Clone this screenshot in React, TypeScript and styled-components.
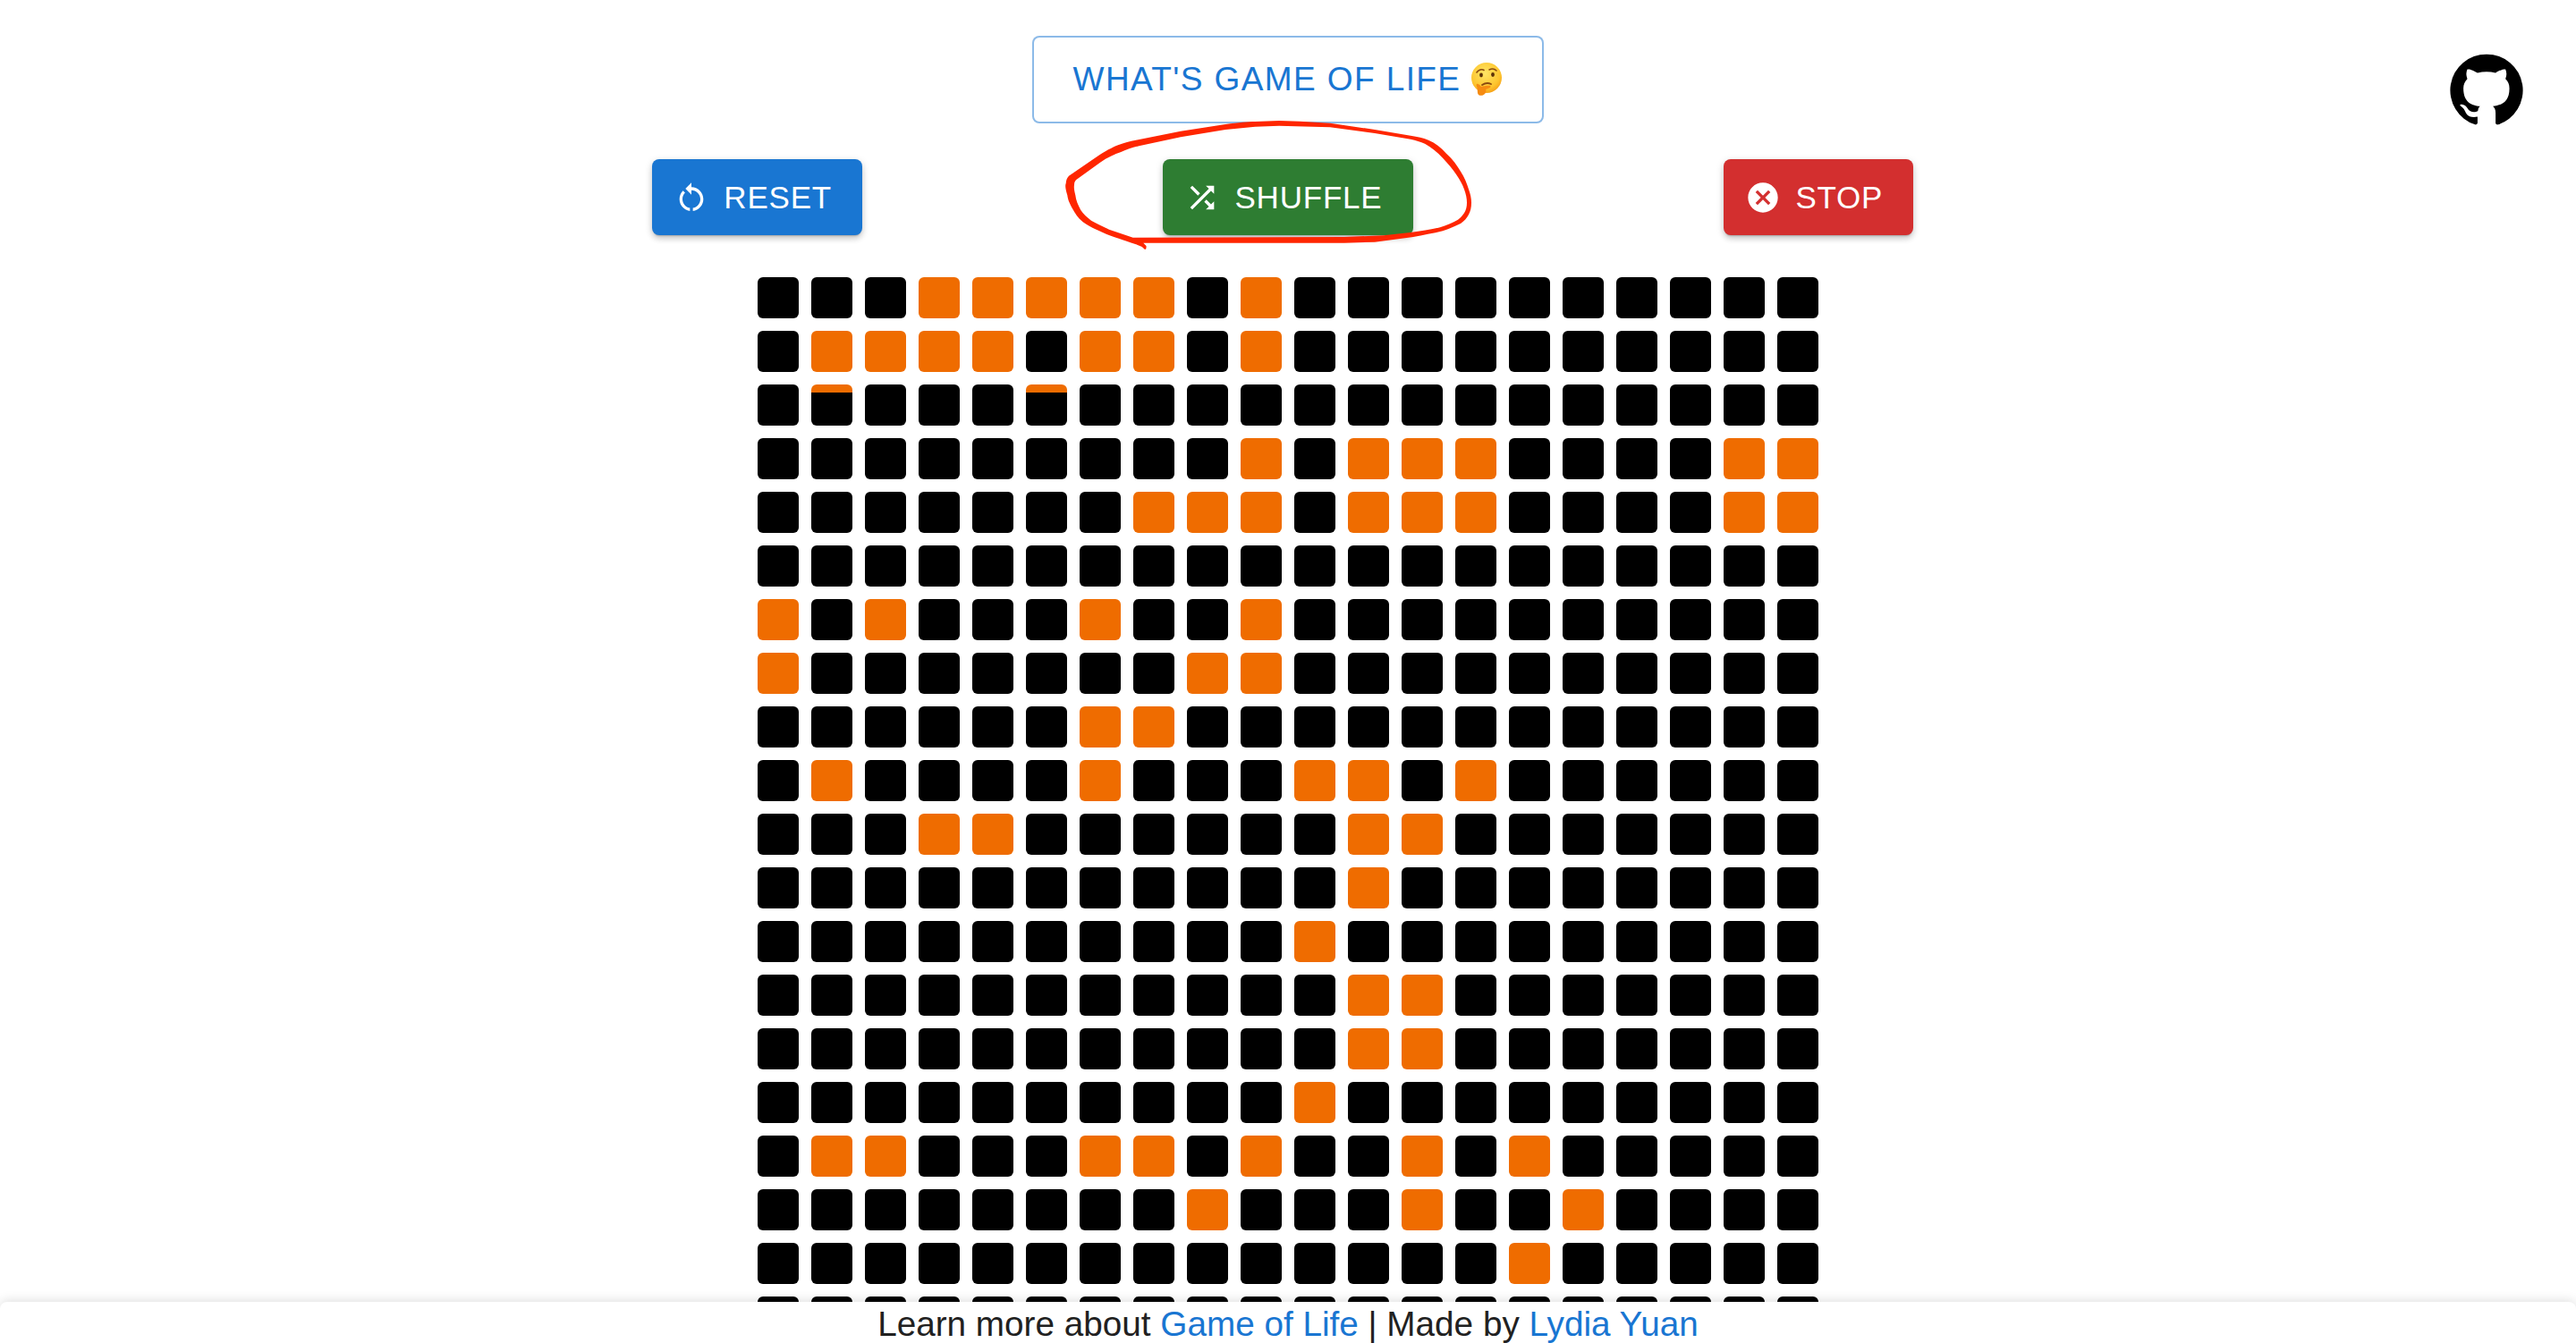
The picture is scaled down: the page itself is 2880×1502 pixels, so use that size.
import * as React from "react";
import styled, {createGlobalStyle} from "styled-components";

const GlobalStyle = createGlobalStyle`
  html, body {
    margin: 0;
    height: 100%;
    overflow: hidden;
    background: #fff;
    font-family: "Liberation Sans", Arial, sans-serif;
  }
`;

const Page = styled.div`
  position: relative;
  display: flex;
  flex-direction: column;
  align-items: center;
  height: 1502px;
  padding-top: 40px;
  box-sizing: border-box;
  overflow: hidden;
`;

const GithubLink = styled.a`
  position: absolute;
  top: 56px;
  right: 56px;
  width: 88px;
  height: 88px;
  color: #000;
  svg {
    display: block;
    width: 100%;
    height: 100%;
    fill: currentColor;
  }
`;

const TitleButton = styled.button`
  display: flex;
  align-items: center;
  height: 98px;
  padding: 0 44px;
  box-sizing: border-box;
  background: #fff;
  border: 2px solid rgba(25, 118, 210, 0.5);
  border-radius: 8px;
  color: #1976d2;
  font: 400 37px "Liberation Sans", Arial, sans-serif;
  letter-spacing: 1.4px;
`;

const Emoji = styled.svg`
  width: 36px;
  height: 38px;
  margin-left: 11px;
`;

const Controls = styled.div`
  display: grid;
  grid-template-columns: repeat(3, 1fr);
  justify-items: center;
  width: 1780px;
  margin-top: 40px;
`;

const ActionButton = styled.button<{ $color: string }>`
  display: flex;
  align-items: center;
  height: 85px;
  padding: 0 34px 0 24px;
  box-sizing: border-box;
  background: ${props => props.$color};
  border: 0;
  border-radius: 8px;
  box-shadow: 0 3px 2px -2px rgba(0, 0, 0, 0.2), 0 4px 6px 0 rgba(0, 0, 0, 0.14), 0 2px 10px 0 rgba(0, 0, 0, 0.12);
  color: #fff;
  font: 400 35px "Liberation Sans", Arial, sans-serif;
  letter-spacing: 0.8px;
  svg {
    width: 40px;
    height: 40px;
    margin-right: 16px;
    fill: currentColor;
  }
`;

const Board = styled.div`
  display: grid;
  grid-template-columns: repeat(20, 46px);
  grid-auto-rows: 46px;
  gap: 14px;
  margin-top: 47px;
`;

const Cell = styled.div<{ $alive: boolean; $stripe: boolean }>`
  border-radius: 6px;
  background: ${props => props.$stripe
    ? "linear-gradient(#ef6c00 9px, #000 9px)"
    : props.$alive ? "#ef6c00" : "#000"};
`;

const Scribble = styled.svg`
  position: absolute;
  left: 1170px;
  top: 125px;
  width: 490px;
  height: 165px;
  fill: #ff2600;
`;

const Footer = styled.footer`
  position: absolute;
  left: 0;
  right: 0;
  bottom: 0;
  height: 46px;
  overflow: hidden;
  background: #fff;
  border-radius: 8px 8px 0 0;
  box-shadow: 0 -2px 12px rgba(0, 0, 0, 0.12);
  color: #212121;
  font-size: 38.7px;
  line-height: 50px;
  text-align: center;
  white-space: nowrap;
`;

const FooterLink = styled.a`
  color: #1976d2;
  text-decoration: none;
`;

const aliveCells: number[][] = [
  [3, 4, 5, 6, 7, 9],
  [1, 2, 3, 4, 6, 7, 9],
  [],
  [9, 11, 12, 13, 18, 19],
  [7, 8, 9, 11, 12, 13, 18, 19],
  [],
  [0, 2, 6, 9],
  [0, 8, 9],
  [6, 7],
  [1, 6, 10, 11, 13],
  [3, 4, 11, 12],
  [11],
  [10],
  [11, 12],
  [11, 12],
  [10],
  [1, 2, 6, 7, 9, 12, 14],
  [8, 12, 15],
  [14],
  [],
];

// cells caught mid-transition, only the top sliver has turned orange
const stripedCells = ["2-1", "2-5"];

const outer = "M1280 279 Q1276 275 1270 273.3 C1255 268 1245 265 1236.7 261.7 C1226 257 1219 254 1213.3 250 C1206 245 1203 240 1200 235 C1196 228 1194 224 1193.3 218.3 C1191.5 212 1190.5 208 1191.7 205 C1192 201 1193 199 1195 196.7 L1226.7 175 C1236 169 1243 165 1250 162.3 C1257 159.5 1263 158 1270 156.7 L1320 146.7 L1370 139 C1385 137 1395 136 1403.3 136 L1430 135 L1453 135.7 L1487 137.7 L1537 145 L1577 151.7 C1585 153 1591 154 1597 156.7 C1605 160 1611 165 1617 171.7 C1624 178 1629 185 1633 191.7 C1637 198 1640 205 1642 211.7 C1644 217 1645 222 1645 226.7 C1645 232 1644 236 1642 240 C1640 244 1637 247 1633 250 C1627 253 1620 256 1613 258.3 C1602 261 1591 263 1580 265 L1537 270.7 L1503 271.7 L1278.3 271.7 L1281.5 275 Q1282 279 1280 279 Z";
const inner = "M1266.7 265.7 L1240 256.7 C1232 253 1226 250 1220 246.7 C1215 243 1211 239 1208.3 235 C1205 229 1203 224 1202.3 218.3 C1201 213 1200.5 210 1201 206.7 C1201 204 1202 202 1203.3 201 L1230 181.7 C1238 176 1246 172.5 1253.3 170 C1260 167 1266 165 1273.3 163.3 L1320 153.3 L1370 145 L1403.3 141.7 L1430 140.7 L1487 142.3 L1537 149 L1577 155.7 C1583 157 1588 158.5 1593 160.7 C1600 165 1607 170 1613 176.7 C1619 183 1624 189 1628 195 C1632 201 1635 206 1637 211.7 C1639 217 1640 222 1640 226.7 C1640 231 1639 235 1637 238.3 C1635 241 1633 243.5 1630 245.7 C1624 249 1617 252 1610 254.3 C1599 257 1588 258.5 1577 260 L1547 263.3 L1503 265 Z";

const App: React.FC = () => (
  <Page>
    <GlobalStyle/>
    <GithubLink href="#">
      <svg viewBox="0 0 24 24">
        <path d="M12 1.27a11 11 0 00-3.48 21.46c.55.09.73-.28.73-.55v-1.84c-3.03.64-3.67-1.46-3.67-1.46-.55-1.29-1.28-1.65-1.28-1.65-.92-.65.1-.65.1-.65 1.1 0 1.73 1.1 1.73 1.1.92 1.65 2.57 1.2 3.21.92a2 2 0 01.64-1.47c-2.47-.27-5.04-1.19-5.04-5.5 0-1.1.46-2.1 1.2-2.84a3.76 3.76 0 010-2.93s.91-.27 3.11 1.1c1.8-.49 3.7-.49 5.5 0 2.1-1.38 3.02-1.1 3.02-1.1a3.76 3.76 0 010 2.93c.83.74 1.2 1.74 1.2 2.94 0 4.21-2.57 5.13-5.04 5.4.45.37.82.92.82 2.02v3.03c0 .27.1.64.73.55A11 11 0 0012 1.27"/>
      </svg>
    </GithubLink>

    <TitleButton>
      WHAT'S GAME OF LIFE
      <Emoji viewBox="0 0 36 38">
        <defs>
          <radialGradient id="face" cx="0.45" cy="0.35" r="0.7">
            <stop offset="0" stopColor="#ffe566"/>
            <stop offset="0.7" stopColor="#fdc52e"/>
            <stop offset="1" stopColor="#f59a14"/>
          </radialGradient>
        </defs>
        <circle cx="18" cy="17" r="17" fill="url(#face)"/>
        <path d="M7 11c2-3 6-4 8-2.500M21 8c3-1.500 6-1 8 1" fill="none" stroke="#8a4a10" strokeWidth="1.600" strokeLinecap="round"/>
        <ellipse cx="12" cy="14" rx="1.900" ry="2.400" fill="#5d3208"/>
        <ellipse cx="25" cy="13.500" rx="1.900" ry="2.400" fill="#5d3208"/>
        <path d="M13 25c3-2 7-2.500 10-1" fill="none" stroke="#8a4a10" strokeWidth="1.800" strokeLinecap="round"/>
        <path d="M7 24c2-1 4 2 5 3 2-.5 8-1.500 10-1 1 .7.500 2-1 2.500l-4 1.500c1 1.500 0 4-1 5-2 2-5 2.500-7 1-1.500-1.500-1-6-1.500-8-.5-2-1.500-3-.5-4z" fill="#f58b12"/>
      </Emoji>
    </TitleButton>

    <Controls>
      <ActionButton $color="#1976d2">
        <svg viewBox="0 0 24 24">
          <path d="M12 5V2L8 6l4 4V7c3.31 0 6 2.69 6 6 0 2.97-2.160 5.430-5 5.910v2.020c3.950-.49 7-3.850 7-7.930 0-4.420-3.580-8-8-8zm-6 8c0-1.650.67-3.150 1.760-4.240L6.340 7.340C4.900 8.790 4 10.790 4 13c0 4.080 3.050 7.440 7 7.930v-2.020c-2.830-.48-5-2.940-5-5.910z"/>
        </svg>
        RESET
      </ActionButton>
      <ActionButton $color="#2e7d32">
        <svg viewBox="0 0 24 24">
          <path d="M10.590 9.170L5.410 4 4 5.410l5.170 5.170 1.420-1.410zM14.500 4l2.040 2.040L4 18.590 5.410 20 17.960 7.460 20 9.500V4h-5.500zm.33 9.410l-1.410 1.410 3.130 3.130L14.500 20H20v-5.500l-2.040 2.040-3.130-3.130z"/>
        </svg>
        SHUFFLE
      </ActionButton>
      <ActionButton $color="#d32f2f">
        <svg viewBox="0 0 24 24">
          <path d="M12 2C6.470 2 2 6.470 2 12s4.470 10 10 10 10-4.470 10-10S17.530 2 12 2zm5 13.590L15.590 17 12 13.410 8.410 17 7 15.590 10.590 12 7 8.410 8.410 7 12 10.590 15.590 7 17 8.410 13.410 12 17 15.590z"/>
        </svg>
        STOP
      </ActionButton>
    </Controls>

    <Board>
      {aliveCells.map((row, rowIndex) =>
        Array.from({length: 20}, (_, col) =>
          <Cell
            key={`${rowIndex}-${col}`}
            $alive={row.includes(col)}
            $stripe={stripedCells.includes(`${rowIndex}-${col}`)}
          />
        )
      )}
    </Board>

    <Scribble viewBox="1170 125 490 165">
      <path fillRule="evenodd" d={`${outer} ${inner}`}/>
    </Scribble>

    <Footer>
      Learn more about <FooterLink href="#">Game of Life</FooterLink> | Made by <FooterLink href="#">Lydia Yuan</FooterLink>
    </Footer>
  </Page>
);

export default App;
